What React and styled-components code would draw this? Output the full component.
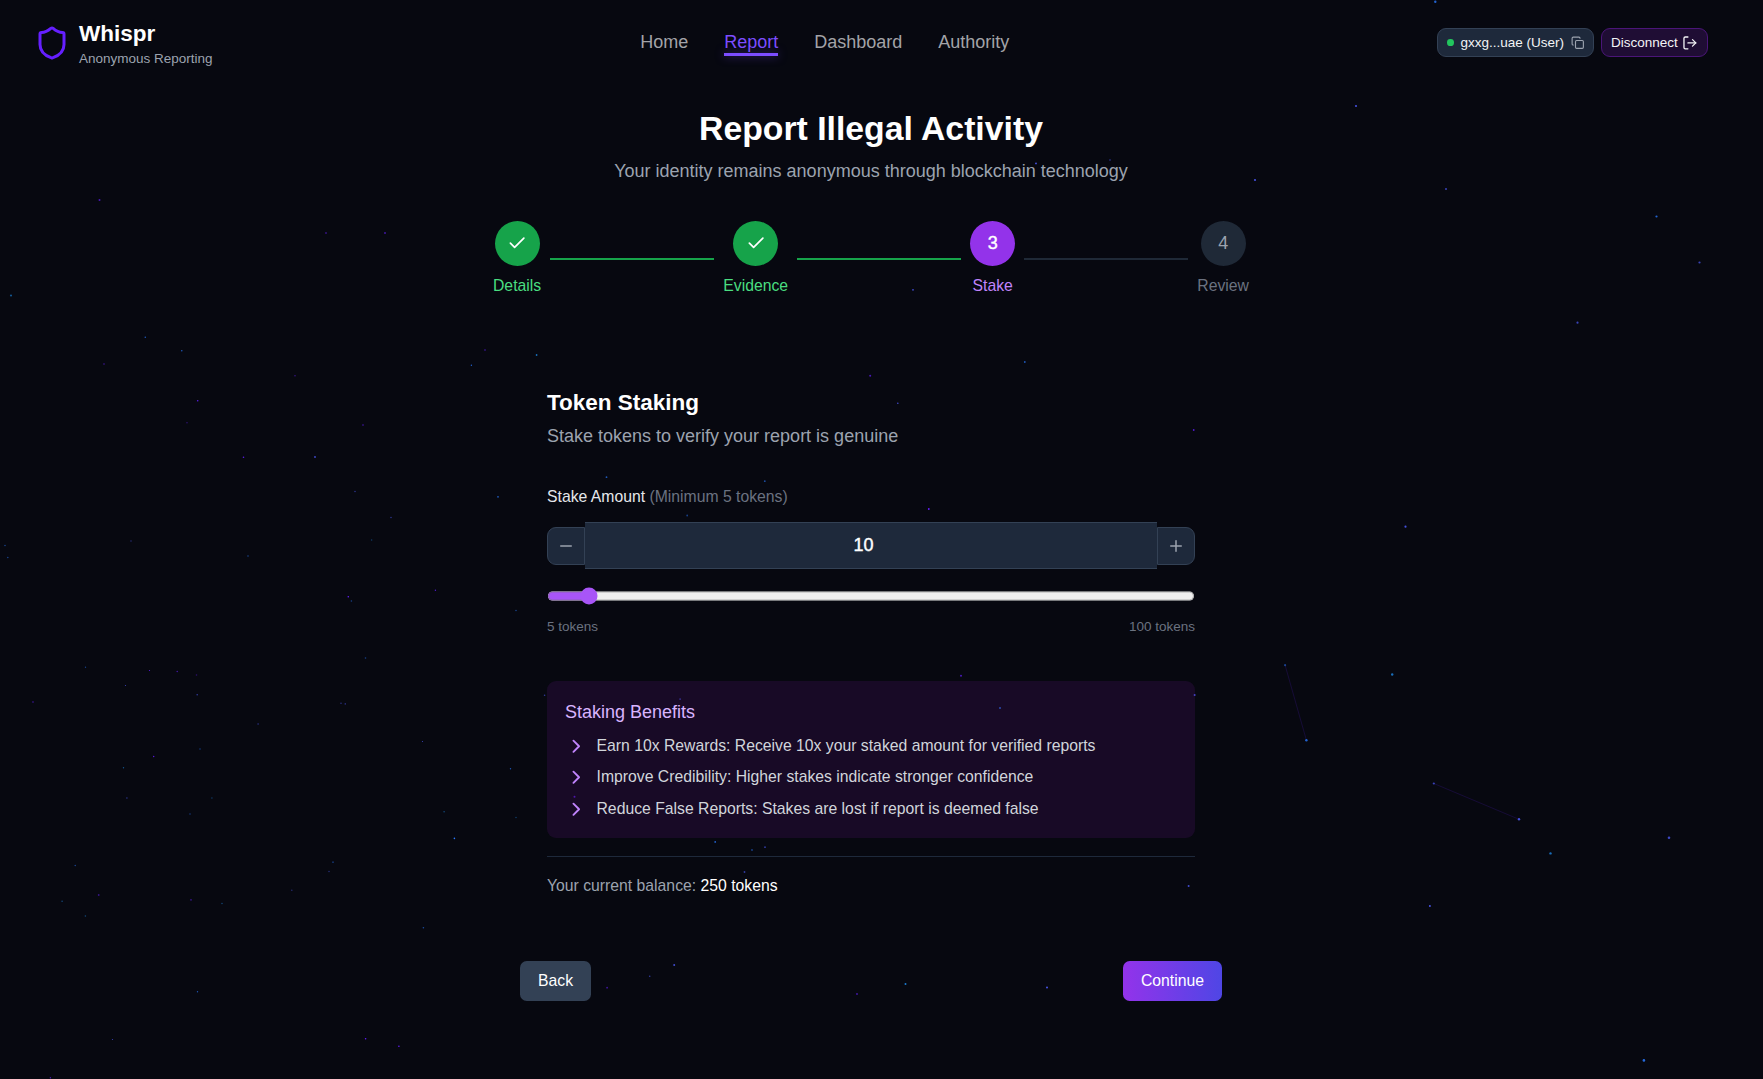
import React, { useState } from "react";
import styled, { createGlobalStyle } from "styled-components";
import { Shield, Copy, LogOut, Check, Minus, Plus, ChevronRight } from "lucide-react";

const GlobalStyle = createGlobalStyle`
  *, *::before, *::after { box-sizing: border-box; }
  html { font-size: 18px; }
  body {
    margin: 0;
    background: #070810;
    color: #fff;
    font-family: "Liberation Sans", Arial, sans-serif;
    line-height: 1.5;
    overflow: hidden;
  }
  h1, h2, h3, p, ul { margin: 0; padding: 0; font-weight: inherit; }
  button, input { font: inherit; color: inherit; margin: 0; }
`;

const Page = styled.div`
  position: relative;
  height: 100vh;
  overflow: hidden;
  padding-right: 21px;
`;

const Stars = styled.svg`
  position: absolute;
  inset: 0;
  width: 1763px;
  height: 1079px;
  pointer-events: none;
`;

const Header = styled.header`
  position: relative;
  display: flex;
  align-items: center;
  justify-content: space-between;
  height: 85.5px;
  padding: 0 34px;
`;

const Brand = styled.div`
  display: flex;
  align-items: center;
  gap: 9px;
`;

const BrandName = styled.div`
  font-size: 22.5px;
  line-height: 31.5px;
  font-weight: 700;
`;

const BrandTag = styled.div`
  font-size: 13.5px;
  line-height: 18px;
  color: #9ca3af;
`;

const Nav = styled.nav`
  display: flex;
  gap: 36px;
`;

const NavLink = styled.a`
  padding-top: 1.5px;
  font-size: 18px;
  line-height: 22px;
  color: ${(p) => (p.$active ? "#7c4dff" : "#a3a3a8")};
  &::after {
    content: "";
    display: block;
    height: 3px;
    background: ${(p) => (p.$active ? "#7c4dff" : "transparent")};
    box-shadow: ${(p) => (p.$active ? "0 0 10px rgba(124, 77, 255, 0.5)" : "none")};
  }
`;

const Account = styled.div`
  display: flex;
  gap: 6.75px;
`;

const Pill = styled.button`
  display: flex;
  align-items: center;
  gap: ${(p) => p.$gap};
  height: 29px;
  padding: 0 9px;
  border: 1px solid ${(p) => (p.$accent ? "#4a1578" : "#334155")};
  border-radius: 9px;
  background: ${(p) => (p.$accent ? "rgba(88, 28, 135, 0.3)" : "#1e293b")};
  color: #f3f4f6;
  font-size: 13.5px;
  line-height: 18px;
  svg { color: ${(p) => (p.$accent ? "#f3f4f6" : "#9ca3af")}; }
`;

const OnlineDot = styled.span`
  width: 6.75px;
  height: 6.75px;
  border-radius: 50%;
  background: #22c55e;
`;

const Main = styled.main`
  position: relative;
  width: 756px;
  margin: 0 auto;
  padding-top: 22.5px;
`;

const Title = styled.h1`
  font-size: 33.75px;
  line-height: 40.5px;
  font-weight: 700;
  text-align: center;
`;

const Subtitle = styled.p`
  margin-top: ${(p) => p.$top};
  font-size: 18px;
  line-height: 27px;
  color: #9ca3af;
  text-align: ${(p) => p.$align || "left"};
`;

const Steps = styled.div`
  display: flex;
  align-items: center;
  margin-top: 36px;
`;

const stepColors = {
  done: { fill: "#16a34a", mark: "#fff", label: "#4ade80" },
  active: { fill: "#9333ea", mark: "#fff", label: "#c084fc" },
  todo: { fill: "#1f2937", mark: "#9ca3af", label: "#6b7280" },
};

const Step = styled.div`
  display: flex;
  flex-direction: column;
  align-items: center;
  gap: 9px;
  font-size: 15.75px;
  line-height: 22.5px;
  color: ${(p) => stepColors[p.$state].label};
`;

const StepCircle = styled.div`
  display: flex;
  align-items: center;
  justify-content: center;
  width: 45px;
  height: 45px;
  border-radius: 50%;
  background: ${(p) => stepColors[p.$state].fill};
  color: ${(p) => stepColors[p.$state].mark};
  font-size: 18px;
  -webkit-text-stroke: ${(p) => (p.$state === "active" ? "0.4px" : "0")} currentColor;
`;

const StepLine = styled.div`
  flex: 1;
  height: 2.25px;
  margin: 0 9px;
  background: ${(p) => (p.$done ? "#16a34a" : "#1f2937")};
`;

const Card = styled.section`
  margin: 36px 27px 0;
  padding: 54px 27px 27px;
`;

const CardTitle = styled.h2`
  font-size: 22.5px;
  line-height: 31.5px;
  font-weight: 700;
`;

const FieldLabel = styled.label`
  display: block;
  margin-top: 36px;
  font-size: 15.75px;
  line-height: 22.5px;
  color: #e5e7eb;
  span { color: #6b7280; }
`;

const Stepper = styled.div`
  display: flex;
  align-items: center;
  margin-top: 13.5px;
`;

const StepperButton = styled.button`
  display: flex;
  align-items: center;
  justify-content: center;
  width: 38px;
  height: 38px;
  padding: 0;
  border: 1px solid #334155;
  border-radius: ${(p) => (p.$side === "left" ? "9px 0 0 9px" : "0 9px 9px 0")};
  background: #1e293b;
  color: #9ca3af;
`;

const AmountInput = styled.input`
  flex: 1;
  min-width: 0;
  height: 47px;
  padding: 9px 0;
  border: solid #334155;
  border-width: 1px 0;
  border-radius: 0;
  outline: none;
  background: #1e293b;
  font-size: 18px;
  text-align: center;
  -webkit-text-stroke: 0.4px currentColor;
`;

const Range = styled.input`
  display: block;
  width: 576px;
  height: 16px;
  margin: 16px 0 0;
  accent-color: #a855f7;
  zoom: 1.125;
`;

const RangeLabels = styled.div`
  display: flex;
  justify-content: space-between;
  margin-top: 12.5px;
  font-size: 13.5px;
  line-height: 18px;
  color: #6b7280;
`;

const Benefits = styled.div`
  margin-top: 45px;
  padding: 18px;
  border-radius: 9px;
  background: rgba(100, 20, 135, 0.19);
`;

const BenefitsTitle = styled.h3`
  font-size: 18px;
  line-height: 27px;
  color: #d8b4fe;
`;

const BenefitList = styled.ul`
  display: flex;
  flex-direction: column;
  gap: 9px;
  margin-top: 9px;
  list-style: none;
`;

const Benefit = styled.li`
  display: flex;
  align-items: center;
  gap: 9px;
  font-size: 15.75px;
  line-height: 22.5px;
  color: #d1d5db;
  svg { color: #c084fc; }
`;

const Balance = styled.p`
  margin-top: 18px;
  padding-top: 18px;
  border-top: 1px solid #1e293b;
  font-size: 15.75px;
  line-height: 22.5px;
  color: #9ca3af;
  span { color: #fff; }
`;

const Actions = styled.div`
  display: flex;
  justify-content: space-between;
  margin: 36px 27px 0;
`;

const ActionButton = styled.button`
  padding: 9px 18px;
  border: 0;
  border-radius: 6.75px;
  background: ${(p) => (p.$primary ? "linear-gradient(to right, #9333ea, #4f46e5)" : "#334155")};
  color: #fff;
  font-size: 15.75px;
  line-height: 22.5px;
`;

const hues = { b: "#2979ff", c: "#1e88e5", i: "#4f5dff", p: "#651fff" };

// x, y, hue, opacity, radius
const particles = [
  [99.5, 200, "p", 0.7, 1], [326, 233, "p", 0.45, 1], [385, 233, "p", 0.6, 1], [11, 295.5, "c", 0.6, 1.1],
  [145.3, 337.3, "b", 0.7, 0.8], [181.8, 350.7, "b", 0.8, 0.7], [104, 364, "p", 0.35, 1], [295, 375.7, "p", 0.6, 0.7],
  [197.7, 400.7, "p", 0.9, 0.8], [187, 422.7, "p", 0.4, 0.8], [363, 425, "p", 0.4, 1], [243.5, 457.3, "p", 0.9, 0.8],
  [315, 457, "i", 0.8, 0.9], [485, 350, "p", 0.4, 1], [471.4, 365.2, "b", 0.8, 0.7], [536.6, 355, "c", 0.8, 0.9],
  [355, 491.5, "i", 0.5, 0.8], [498, 496.8, "b", 0.7, 0.9], [391, 517.5, "i", 0.6, 0.7], [371.6, 540, "c", 0.4, 0.8],
  [131, 541, "i", 0.4, 0.8], [5, 545.5, "b", 0.5, 0.8], [7.8, 557.5, "b", 0.5, 0.8], [248, 556, "b", 0.3, 1],
  [435.4, 590.2, "p", 0.8, 0.7], [348.3, 596.7, "p", 1, 0.8], [351.4, 601, "b", 0.5, 0.8], [516, 610.5, "b", 0.5, 0.8],
  [365.5, 658, "b", 0.5, 0.8], [85.5, 667.2, "b", 0.5, 0.7], [149.5, 670.5, "p", 0.9, 0.6], [177.2, 671.5, "p", 0.7, 0.7],
  [196.5, 675, "p", 0.4, 0.8], [125.5, 685.5, "i", 0.7, 0.6], [197.2, 694.8, "i", 0.6, 0.8], [33, 702, "p", 0.4, 0.9],
  [341, 703.3, "i", 0.45, 0.8], [345.3, 703.9, "i", 0.45, 0.8], [258.1, 724, "i", 0.5, 0.8], [200, 749, "b", 0.25, 1],
  [153.7, 756.5, "p", 0.9, 0.7], [123.5, 767.8, "c", 0.6, 0.7], [422.5, 741.5, "i", 0.7, 0.6], [510.5, 768.8, "b", 0.7, 0.7],
  [126.9, 798, "i", 0.5, 0.8], [211.9, 798, "c", 0.4, 0.8], [190, 814, "b", 0.25, 1], [444.1, 811.8, "c", 0.5, 0.8],
  [516, 817.5, "c", 0.4, 0.8], [454.4, 838.4, "b", 1, 0.8], [333, 862.2, "b", 0.4, 0.9], [329, 871.5, "i", 0.5, 0.7],
  [75.2, 865.5, "b", 0.6, 0.7], [291.8, 890.2, "i", 0.4, 0.8], [98.7, 895, "p", 0.5, 0.9], [62.1, 901.2, "c", 0.5, 0.8],
  [191, 899.8, "p", 0.5, 0.9], [222, 903.5, "c", 0.45, 0.8], [85.4, 916, "c", 0.5, 0.8], [423.4, 927.8, "b", 0.6, 0.8],
  [197.5, 991.7, "b", 0.7, 0.7], [112.5, 1039.5, "i", 0.7, 0.6], [365.6, 1038.8, "p", 1, 0.8], [398.9, 1046.2, "p", 1, 0.8],
  [50.4, 1077.8, "p", 0.7, 0.7], [1285.1, 665.2, "b", 0.5, 1.1], [1306.4, 740.2, "b", 0.8, 1.2], [1392.2, 674.5, "c", 0.8, 1.2],
  [1433.8, 783.5, "i", 0.7, 1.1], [1519, 819.3, "i", 0.85, 1.2], [1669, 837.7, "i", 0.75, 1.3], [1550.5, 853.4, "c", 0.8, 1.2],
  [1429.9, 906, "i", 0.9, 1], [1643.9, 1060.4, "b", 0.85, 1.3], [674.2, 965, "i", 0.8, 1], [649.7, 976.2, "i", 0.6, 0.8],
  [607.1, 987.7, "p", 0.6, 0.9], [857, 994, "p", 0.6, 1], [905.5, 984, "c", 0.9, 1], [1047, 987.4, "i", 0.9, 1],
  [961, 675.8, "p", 0.7, 1], [544.6, 695.2, "i", 0.6, 0.8], [680.1, 699.1, "i", 0.55, 0.9], [1000, 708, "b", 0.7, 1],
  [574.5, 796.8, "p", 0.7, 1], [715.2, 841.9, "b", 0.8, 0.9], [752, 850, "b", 0.5, 0.9], [765, 847.2, "i", 0.6, 0.9],
  [744.5, 872, "i", 0.6, 0.9], [870.2, 375.8, "p", 0.7, 1], [897.8, 403.2, "i", 0.8, 0.8], [606.5, 477.2, "b", 0.7, 0.9],
  [764.8, 481.2, "b", 0.6, 0.9], [687.2, 515.5, "b", 0.5, 0.9], [928.8, 509, "p", 1, 0.9], [913, 289.8, "i", 0.8, 0.9],
  [1036, 163.4, "i", 0.9, 0.9], [1435.3, 1.7, "b", 0.8, 1.2], [1356, 106, "i", 0.85, 1.1], [1255, 180, "i", 0.85, 1.1],
  [1446, 189, "i", 0.7, 1], [1656.5, 216.5, "b", 0.8, 1.1], [1699.5, 262.5, "i", 0.7, 1.1], [1577.5, 322.7, "i", 0.7, 1.1],
  [1110, 160, "i", 0.6, 0.8], [1024.8, 362, "b", 0.7, 0.9], [1193.7, 430, "p", 0.8, 0.9], [1405.5, 526.7, "i", 0.85, 1.1],
  [1194.6, 695, "i", 0.8, 1], [1188.6, 886, "i", 0.8, 1],
];

const links = [
  [1285.1, 665.2, 1306.4, 740.2],
  [1433.8, 783.5, 1519, 819.3],
];

const steps = [
  { label: "Details", state: "done" },
  { label: "Evidence", state: "done" },
  { label: "Stake", state: "active" },
  { label: "Review", state: "todo" },
];

const benefits = [
  "Earn 10x Rewards: Receive 10x your staked amount for verified reports",
  "Improve Credibility: Higher stakes indicate stronger confidence",
  "Reduce False Reports: Stakes are lost if report is deemed false",
];

function ParticleField() {
  return (
    <Stars viewBox="0 0 1763 1079" aria-hidden="true">
      {links.map(([x1, y1, x2, y2]) => (
        <line key={x1} x1={x1} y1={y1} x2={x2} y2={y2} stroke="#651fff" strokeOpacity="0.16" />
      ))}
      {particles.map(([x, y, hue, opacity, r]) => (
        <circle key={`${x}-${y}`} cx={x} cy={y} r={r} fill={hues[hue]} opacity={opacity} />
      ))}
    </Stars>
  );
}

export default function App() {
  const [amount, setAmount] = useState(10);
  const update = (value) => setAmount(Math.min(100, Math.max(5, Number(value))));

  return (
    <Page>
      <GlobalStyle />
      <ParticleField />
      <Header>
        <Brand>
          <Shield size={36} color="#651fff" />
          <div>
            <BrandName>Whispr</BrandName>
            <BrandTag>Anonymous Reporting</BrandTag>
          </div>
        </Brand>
        <Nav>
          {["Home", "Report", "Dashboard", "Authority"].map((item) => (
            <NavLink key={item} $active={item === "Report"}>{item}</NavLink>
          ))}
        </Nav>
        <Account>
          <Pill $gap="6.75px">
            <OnlineDot />
            gxxg...uae (User)
            <Copy size={13.5} />
          </Pill>
          <Pill $accent $gap="4.5px">
            Disconnect
            <LogOut size={15.75} />
          </Pill>
        </Account>
      </Header>

      <Main>
        <Title>Report Illegal Activity</Title>
        <Subtitle $top="9px" $align="center">
          Your identity remains anonymous through blockchain technology
        </Subtitle>

        <Steps>
          {steps.map((step, i) => (
            <React.Fragment key={step.label}>
              <Step $state={step.state}>
                <StepCircle $state={step.state}>
                  {step.state === "done" ? <Check size={20.25} /> : i + 1}
                </StepCircle>
                {step.label}
              </Step>
              {i < steps.length - 1 && <StepLine $done={step.state === "done"} />}
            </React.Fragment>
          ))}
        </Steps>

        <Card>
          <CardTitle>Token Staking</CardTitle>
          <Subtitle $top="4.5px">Stake tokens to verify your report is genuine</Subtitle>

          <FieldLabel htmlFor="amount">
            Stake Amount <span>(Minimum 5 tokens)</span>
          </FieldLabel>
          <Stepper>
            <StepperButton $side="left" onClick={() => update(amount - 1)}>
              <Minus size={18} />
            </StepperButton>
            <AmountInput
              id="amount"
              type="number"
              min="5"
              max="100"
              value={amount}
              onChange={(e) => update(e.target.value)}
            />
            <StepperButton $side="right" onClick={() => update(amount + 1)}>
              <Plus size={18} />
            </StepperButton>
          </Stepper>
          <Range type="range" min="5" max="100" value={amount} onChange={(e) => update(e.target.value)} />
          <RangeLabels>
            <span>5 tokens</span>
            <span>100 tokens</span>
          </RangeLabels>

          <Benefits>
            <BenefitsTitle>Staking Benefits</BenefitsTitle>
            <BenefitList>
              {benefits.map((text) => (
                <Benefit key={text}>
                  <ChevronRight size={22.5} />
                  {text}
                </Benefit>
              ))}
            </BenefitList>
          </Benefits>

          <Balance>
            Your current balance: <span>250 tokens</span>
          </Balance>
        </Card>

        <Actions>
          <ActionButton>Back</ActionButton>
          <ActionButton $primary>Continue</ActionButton>
        </Actions>
      </Main>
    </Page>
  );
}
